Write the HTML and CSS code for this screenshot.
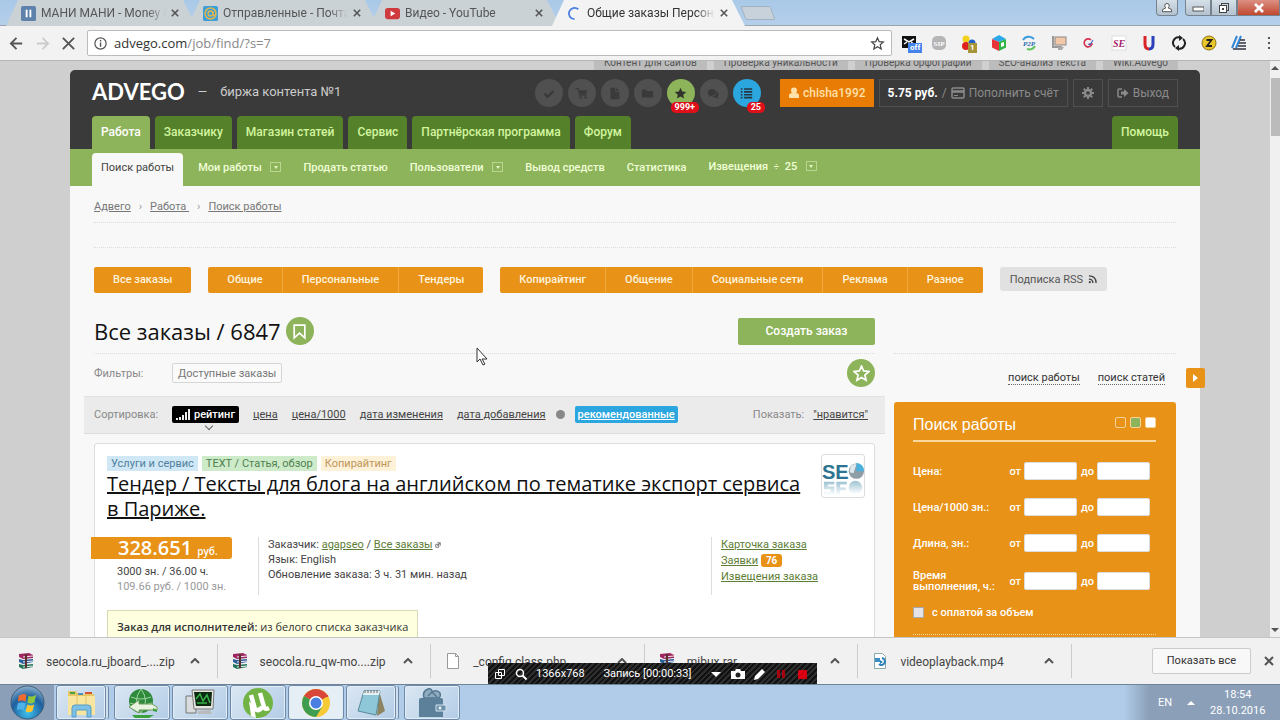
FILE: index.html
```
<!DOCTYPE html>
<html lang="ru">
<head>
    <meta charset="UTF-8">
    <meta name="viewport" content="width=device-width, initial-scale=1.0">
    <title>Общие заказы Персональные</title>
    <link rel="stylesheet" href="styles.css">
</head>
<body>
    <!-- browser tabs -->
    <div class="tabstrip">
        <div class="tab">
            <svg class="fav" viewBox="0 0 16 16"><rect width="16" height="16" rx="2" fill="#5f82ad"/><path d="M5 4h2v8H5zM9 4h2v8H9z" fill="#fff"/></svg>
            <span class="tab-title">МАНИ МАНИ - Money (</span>
            <button class="tab-close" aria-label="Закрыть"><svg viewBox="0 0 10 10"><path d="M1 1l8 8M9 1L1 9"/></svg></button>
        </div>
        <div class="tab">
            <svg class="fav" viewBox="0 0 16 16"><rect width="16" height="16" rx="2" fill="#3c9fd8"/><circle cx="8" cy="8" r="5.800" fill="none" stroke="#e3b64c" stroke-width="1.600"/><circle cx="8" cy="8" r="2.600" fill="none" stroke="#e3b64c" stroke-width="1.500"/><path d="M10.600 6v3q1 2 3 0" fill="none" stroke="#e3b64c" stroke-width="1.300"/></svg>
            <span class="tab-title">Отправленные - Почта</span>
            <button class="tab-close" aria-label="Закрыть"><svg viewBox="0 0 10 10"><path d="M1 1l8 8M9 1L1 9"/></svg></button>
        </div>
        <div class="tab">
            <svg class="fav" viewBox="0 0 16 16"><rect y="2" width="16" height="12" rx="3" fill="#cf3a3e"/><path d="M6 5l5 3-5 3z" fill="#fff"/></svg>
            <span class="tab-title">Видео - YouTube</span>
            <button class="tab-close" aria-label="Закрыть"><svg viewBox="0 0 10 10"><path d="M1 1l8 8M9 1L1 9"/></svg></button>
        </div>
        <div class="tab active">
            <svg class="fav" viewBox="0 0 16 16"><path d="M12 3.500A6 6 0 1 0 8 14" fill="none" stroke="#4a7fe0" stroke-width="2"/></svg>
            <span class="tab-title">Общие заказы Персона</span>
            <button class="tab-close" aria-label="Закрыть"><svg viewBox="0 0 10 10"><path d="M1 1l8 8M9 1L1 9"/></svg></button>
        </div>
        <button class="new-tab" aria-label="Новая вкладка"></button>
        <div class="win-buttons">
            <button class="win user" aria-label="Пользователь"><svg viewBox="0 0 12 12"><path d="M6 1.500a2.200 2.200 0 0 1 1 4.200l3.500 2v2h-9v-2l3.500-2a2.200 2.200 0 0 1 1-4.200z" fill="#fff" stroke="#555"/></svg></button>
            <button class="win left" aria-label="Свернуть"><svg viewBox="0 0 12 12"><rect x="1" y="5" width="11" height="4" fill="#fff" stroke="#555"/></svg></button>
            <button class="win mid" aria-label="Развернуть"><svg viewBox="0 0 12 12"><rect x="3.500" y="1.500" width="7" height="7" fill="none" stroke="#444"/><rect x="1.500" y="3.500" width="7" height="7" fill="#fff" stroke="#444"/><rect x="4" y="6" width="2" height="2" fill="#444"/></svg></button>
            <button class="win close" aria-label="Закрыть окно"><svg viewBox="0 0 12 12"><path d="M2 2l8 8M10 2l-8 8" stroke="#fff" stroke-width="2.600"/></svg></button>
        </div>
    </div>

    <!-- address bar -->
    <div class="toolbar">
        <button class="tool" aria-label="Назад"><svg viewBox="0 0 16 16"><path d="M14 8H2M8 2L2 8l6 6"/></svg></button>
        <button class="tool disabled" aria-label="Вперёд"><svg viewBox="0 0 16 16"><path d="M2 8h12M8 2l6 6-6 6"/></svg></button>
        <button class="tool" aria-label="Стоп"><svg viewBox="0 0 16 16"><path d="M2 2l12 12M14 2L2 14"/></svg></button>
        <div class="omnibox">
            <svg class="info" viewBox="0 0 16 16"><circle cx="8" cy="8" r="6" fill="none" stroke="#555" stroke-width="1.300"/><path d="M7.300 7h1.500v4.500H7.300zM7.300 4.300h1.500v1.500H7.300z" fill="#555"/></svg>
            <span class="url">advego.com<span>/job/find/?s=7</span></span>
            <svg class="bookmark" viewBox="0 0 16 16"><path d="M8 2l1.800 4.100 4.400.4-3.300 2.900 1 4.400L8 11.500l-3.900 2.300 1-4.400L1.800 6.500l4.400-.4z" fill="none" stroke="#444" stroke-width="1.300"/></svg>
        </div>
        <div class="extensions">
            <span class="ext"><svg viewBox="0 0 16 16"><path d="M1 1h14v12H1z" fill="#111"/><path d="M3 4l5 3 5-3M3 9l3-2M13 9l-3-2" stroke="#fff" stroke-width="1.500" fill="none"/></svg><b class="ext-badge blue">off</b></span>
            <span class="ext"><svg viewBox="0 0 16 16"><rect x="1" y="1" width="14" height="14" rx="5" fill="#b5b5b5"/><text x="8" y="11" class="ext-sip">SIP</text></svg></span>
            <span class="ext"><svg viewBox="0 0 16 16"><circle cx="5" cy="4" r="3.500" fill="#f4d21c"/><circle cx="11" cy="8" r="3.500" fill="#2262c7"/><circle cx="5" cy="11" r="4" fill="#e0221c"/></svg><b class="ext-badge olive">1</b></span>
            <span class="ext"><svg viewBox="0 0 16 16"><path d="M8 0l7 4-7 3-7-3z" fill="#2aa9e8"/><path d="M1 4l7 3v9l-7-3.500z" fill="#e8333a"/><path d="M15 4L8 7v9l7-3.500z" fill="#2fb545"/><path d="M10 8l3-1v4l-3 1z" fill="#fff"/></svg></span>
            <span class="ext"><svg viewBox="0 0 16 16"><path d="M2 5a7 7 0 0 1 11-1" stroke="#3a9be0" stroke-width="2" fill="none"/><path d="M14 11a7 7 0 0 1-8 3" stroke="#5fc25b" stroke-width="2" fill="none"/><text x="8" y="11" class="ext-p2p">P2P</text></svg></span>
            <span class="ext"><svg viewBox="0 0 16 16"><path d="M2 1v11h9" fill="none" stroke="#999" stroke-width="2"/><rect x="4" y="2" width="11" height="8" fill="#f3c8a8" stroke="#888"/><path d="M7 12l6 0-2 3H7z" fill="#aaa"/></svg></span>
            <span class="ext"><svg viewBox="0 0 16 16"><path d="M10 5a4 4 0 1 0 1 4H8" fill="none" stroke="#d83250" stroke-width="1.600"/><path d="M7 9l2 1 3-5" fill="none" stroke="#4a6fc0" stroke-width="1.200"/></svg></span>
            <span class="ext"><svg viewBox="0 0 16 16"><rect x="1" y="1" width="14" height="14" fill="#fff" stroke="#ddd"/><text x="8" y="12" class="ext-se">SE</text></svg></span>
            <span class="ext"><svg viewBox="0 0 16 16"><path d="M4 1v8q0 5 4 5" fill="none" stroke="#d9252a" stroke-width="3"/><path d="M12 1v8q0 5-4 5" fill="none" stroke="#2a3fb8" stroke-width="3"/></svg></span>
            <span class="ext"><svg viewBox="0 0 16 16"><path d="M9 2.500A5.500 5.500 0 0 0 4 12M7 13.500A5.500 5.500 0 0 0 12 4" fill="none" stroke="#222" stroke-width="2"/><path d="M8 0l4 3-4 3zM8 16l-4-3 4-3z" fill="#222"/></svg></span>
            <span class="ext"><svg viewBox="0 0 16 16"><circle cx="8" cy="8" r="7" fill="#e9c527" stroke="#8c7418"/><path d="M5.500 5h5L6 11h5" fill="none" stroke="#222" stroke-width="1.800"/></svg></span>
            <span class="ext"><svg viewBox="0 0 16 16"><path d="M6 1L1 13M10 1L5 13" stroke="#3187d6" stroke-width="2"/><path d="M9 5h5M8 8h7M7 11h8M2 14h13" stroke="#334" stroke-width="1.500"/></svg></span>
        </div>
        <button class="menu-dots" aria-label="Меню"><svg viewBox="0 0 4 16"><path d="M1 2h2v2H1zM1 7h2v2H1zM1 12h2v2H1z" fill="#555"/></svg></button>
    </div>

    <div class="viewport">
        <div class="scroll-area">
            <div class="page">
                <div class="top-links">
                    <a href="#">Контент для сайтов</a>
                    <a href="#">Проверка уникальности</a>
                    <a href="#">Проверка орфографии</a>
                    <a href="#">SEO-анализ текста</a>
                    <a href="#">Wiki.Advego</a>
                </div>

                <header class="header">
                    <div class="header-row">
                        <a class="logo" href="#">ADVEGO</a>
                        <span class="slogan"><i>—</i>биржа контента №1</span>
                        <div class="round-icons">
                            <a class="round" href="#" aria-label="Выполнено"><svg viewBox="0 0 16 16"><path d="M3 8l4 4 7-7" fill="none" stroke="#3a3a3a" stroke-width="3"/></svg></a>
                            <a class="round" href="#" aria-label="Корзина"><svg viewBox="0 0 16 16"><path d="M1 2h3l2 8h8" fill="none" stroke="#3a3a3a" stroke-width="1.500"/><path d="M4 4h11l-1 5H6z" fill="#3a3a3a"/><circle cx="7" cy="13" r="1.500" fill="#3a3a3a"/><circle cx="13" cy="13" r="1.500" fill="#3a3a3a"/></svg></a>
                            <a class="round" href="#" aria-label="Документы"><svg viewBox="0 0 16 16"><path d="M3 1h6v5h5v9H3zM10 1l4 4h-4z" fill="#3a3a3a"/></svg></a>
                            <a class="round" href="#" aria-label="Папка"><svg viewBox="0 0 16 16"><path d="M1 4q0-1 1-1h4l1 2h7q1 0 1 1v6q0 1-1 1H2q-1 0-1-1z" fill="#3a3a3a"/></svg></a>
                            <a class="round green" href="#" aria-label="Избранное"><svg viewBox="0 0 16 16"><path d="M8 1l2.100 4.600 5 .5-3.800 3.300 1.100 4.900L8 11.800l-4.400 2.500 1.100-4.900L.900 6.100l5-.5z" fill="#2f332a"/></svg><b class="count">999+</b></a>
                            <a class="round" href="#" aria-label="Сообщения"><svg viewBox="0 0 16 16"><ellipse cx="6" cy="6.500" rx="5" ry="4" fill="#3a3a3a"/><path d="M2 12l1-4 4 2zM12 5q4 3 1 7l1 2-4-1-4-1q6 0 6-7z" fill="#3a3a3a"/></svg></a>
                            <a class="round blue" href="#" aria-label="Извещения"><svg viewBox="0 0 16 16"><path d="M1 2.500h2M5 2.500h10M1 6h2M5 6h10M1 9.500h2M5 9.500h10M1 13h2M5 13h10" stroke="#263640" stroke-width="2"/></svg><b class="count">25</b></a>
                        </div>
                        <a class="user-btn" href="#"><svg viewBox="0 0 12 12"><circle cx="6" cy="3.500" r="3" fill="#ffe0a8"/><path d="M1 11V9q0-3 3-3h4q3 0 3 3v2z" fill="#ffe0a8"/></svg>chisha1992</a>
                        <a class="box-btn balance" href="#"><b>5.75 руб.</b> / <svg viewBox="0 0 14 12"><rect x="1" y="1" width="12" height="10" rx="1" fill="none" stroke="#8a8a8a" stroke-width="1.500"/><path d="M1 4.500h12" stroke="#8a8a8a" stroke-width="2.500"/><path d="M3 8.500h4" stroke="#8a8a8a"/></svg> Пополнить счёт</a>
                        <a class="box-btn" href="#" aria-label="Настройки"><svg viewBox="0 0 12 12"><circle cx="6" cy="6" r="3" fill="none" stroke="#8a8a8a" stroke-width="2.400"/><path d="M6 0v2M6 10v2M0 6h2M10 6h2M1.800 1.800l1.400 1.400M8.800 8.800l1.400 1.400M1.800 10.200l1.400-1.400M8.800 3.200l1.400-1.400" stroke="#8a8a8a" stroke-width="2"/></svg></a>
                        <a class="box-btn exit" href="#"><svg viewBox="0 0 12 12"><path d="M5 2H2q-1 0-1 1v6q0 1 1 1h3" fill="none" stroke="#8a8a8a" stroke-width="1.500"/><path d="M4 4.500h3V2l4.500 4L7 10V7.500H4z" fill="#8a8a8a"/></svg>Выход</a>
                    </div>
                    <nav class="main-nav">
                        <a class="current" href="#">Работа</a>
                        <a href="#">Заказчику</a>
                        <a href="#">Магазин статей</a>
                        <a href="#">Сервис</a>
                        <a href="#">Партнёрская программа</a>
                        <a href="#">Форум</a>
                        <a class="help" href="#">Помощь</a>
                    </nav>
                </header>

                <nav class="sub-nav">
                    <a class="current" href="#">Поиск работы</a>
                    <a href="#">Мои работы <i class="drop"></i></a>
                    <a href="#">Продать статью</a>
                    <a href="#">Пользователи <i class="drop"></i></a>
                    <a href="#">Вывод средств</a>
                    <a href="#">Статистика</a>
                    <a href="#">Извещения <small>÷</small> 25 <i class="drop"></i></a>
                </nav>

                <div class="content">
                    <div class="crumbs">
                        <a href="#">Адвего</a><i>›</i><a href="#">Работа&nbsp;</a><i>›</i><a href="#">Поиск работы</a>
                    </div>
                    <div class="blank-strip"></div>

                    <div class="type-row">
                        <div class="type-group"><a href="#">Все заказы</a></div>
                        <div class="type-group"><a href="#">Общие</a><a href="#">Персональные</a><a href="#">Тендеры</a></div>
                        <div class="type-group"><a href="#">Копирайтинг</a><a href="#">Общение</a><a href="#">Социальные сети</a><a href="#">Реклама</a><a href="#">Разное</a></div>
                        <a class="rss" href="#">Подписка RSS <svg viewBox="0 0 10 10"><path d="M1 1q8 0 8 8M1 4.500q4.500 0 4.500 4.500" fill="none" stroke="#444" stroke-width="1.500"/><circle cx="2" cy="8" r="1.200" fill="#444"/></svg></a>
                    </div>

                    <div class="columns">
                        <main class="orders">
                            <div class="title-row">
                                <h1>Все заказы / 6847</h1>
                                <a class="disc" href="#" aria-label="В закладки"><svg viewBox="0 0 16 16"><path d="M3 2h10v12l-5-4.500L3 14z" fill="none" stroke="#fff" stroke-width="1.600"/></svg></a>
                                <button class="create">Создать заказ</button>
                            </div>
                            <div class="filter-row">
                                <span>Фильтры:</span>
                                <button class="filter">Доступные заказы</button>
                                <a class="disc" href="#" aria-label="В избранное"><svg viewBox="0 0 16 16"><path d="M8 1l2 4.600 5 .5-3.800 3.300 1.100 4.900L8 11.800l-4.300 2.500 1.100-4.900L1 6.100l5-.5z" fill="none" stroke="#fff" stroke-width="1.600"/></svg></a>
                            </div>
                            <div class="sort-row">
                                <span class="sort-label">Сортировка:</span>
                                <a class="rating" href="#"><svg viewBox="0 0 14 11"><path d="M0 9h2v2H0zM3 8h2v3H3zM6 6h2v5H6zM9 3h2v8H9zM12 0h2v11h-2z" fill="#eee"/></svg>рейтинг</a>
                                <a href="#">цена</a>
                                <a href="#">цена/1000</a>
                                <a href="#">дата изменения</a>
                                <a href="#">дата добавления</a>
                                <i class="dot"></i>
                                <a class="recommended" href="#">рекомендованные</a>
                                <span class="show-label">Показать:</span>
                                <a href="#">"нравится"</a>
                            </div>

                            <article class="order">
                                <div class="order-head">
                                    <div class="order-name">
                                        <div class="tags"><span class="tag sky">Услуги и сервис</span><span class="tag mint">TEXT / Статья, обзор</span><span class="tag sand">Копирайтинг</span></div>
                                        <h2><a href="#">Тендер / Тексты для блога на английском по тематике экспорт сервиса в Париже.</a></h2>
                                    </div>
                                    <svg class="avatar" viewBox="0 0 44 44">
                                        <defs><linearGradient id="fade" x1="0" y1="0" x2="0" y2="1"><stop offset="0" stop-color="#9fc3d2"/><stop offset="1" stop-color="#fff"/></linearGradient></defs>
                                        <text x="0" y="25" class="seo">SE</text>
                                        <circle cx="36" cy="17" r="8" fill="#8f9da6"/><path d="M36 17V8q8 1 8 9z" fill="#4bb1dc"/><path d="M30 12q4-4 6-2l-3 9-4-1z" fill="#dfe9ee"/>
                                        <path d="M2 28h11v3H6v2h7v9H2v-3h7v-3H2zM15 28h11v3h-7v3h6v3h-6v5h-4z" fill="url(#fade)"/><circle cx="35" cy="34" r="7" fill="url(#fade)"/>
                                    </svg>
                                </div>
                                <div class="order-info">
                                    <div class="price-col">
                                        <div class="price">328.651 <small>руб.</small></div>
                                        <p>3000 зн. / 36.00 ч.</p>
                                        <p class="muted">109.66 руб. / 1000 зн.</p>
                                    </div>
                                    <div class="details">
                                        <p>Заказчик: <a href="#">agapseo</a> / <a href="#">Все заказы</a> <svg viewBox="0 0 8 8"><path d="M1 3h4v4H1zM3 1h4v4M3 5l4-4" fill="none" stroke="#555"/></svg></p>
                                        <p>Язык: English</p>
                                        <p>Обновление заказа: 3 ч. 31 мин. назад</p>
                                    </div>
                                    <div class="order-links">
                                        <p><a href="#">Карточка заказа</a></p>
                                        <p><a href="#">Заявки</a> <b>76</b></p>
                                        <p><a href="#">Извещения заказа</a></p>
                                    </div>
                                </div>
                                <div class="notice"><b>Заказ для исполнителей:</b> из белого списка заказчика</div>
                            </article>
                        </main>

                        <aside class="sidebar">
                            <div class="side-tabs">
                                <a href="#">поиск работы</a>
                                <a href="#">поиск статей</a>
                            </div>
                            <form class="search">
                                <div class="search-head">
                                    <h3>Поиск работы</h3>
                                    <i class="sq"></i><i class="sq green"></i><i class="sq white"></i>
                                </div>
                                <div class="field"><span>Цена:</span><label for="p1">от</label><input id="p1" type="text"><label for="p2">до</label><input id="p2" type="text"></div>
                                <div class="field"><span>Цена/1000 зн.:</span><label for="k1">от</label><input id="k1" type="text"><label for="k2">до</label><input id="k2" type="text"></div>
                                <div class="field"><span>Длина, зн.:</span><label for="l1">от</label><input id="l1" type="text"><label for="l2">до</label><input id="l2" type="text"></div>
                                <div class="field tall"><span>Время выполнения, ч.:</span><label for="t1">от</label><input id="t1" type="text"><label for="t2">до</label><input id="t2" type="text"></div>
                                <label class="check"><input type="checkbox"> с оплатой за объем</label>
                            </form>
                        </aside>
                    </div>
                </div>
                <button class="side-toggle" aria-label="Скрыть панель"></button>
            </div>
        </div>
        <div class="scrollbar"><i class="up"></i><i class="thumb"></i><i class="down"></i></div>
    </div>

    <!-- downloads -->
    <div class="downloads">
        <div class="download">
            <svg class="file" viewBox="0 0 16 16"><path d="M1 1l10-1 4 2v3L5 6 1 4z" fill="#a02660"/><path d="M1 6l4 1 10-1v3L5 11 1 9z" fill="#2d5f9a"/><path d="M1 11l4 1 10-1v3L5 16l-4-2z" fill="#23735a"/><path d="M5 4l10-1M5 9l10-1M5 14l10-1" stroke="#eee"/><path d="M7 1h2v14H7z" fill="#5b3030"/></svg>
            <span>seocola.ru_jboard_....zip</span>
            <button aria-label="Меню файла"><svg viewBox="0 0 10 6"><path d="M1 5l4-4 4 4"/></svg></button>
        </div>
        <div class="download">
            <svg class="file" viewBox="0 0 16 16"><path d="M1 1l10-1 4 2v3L5 6 1 4z" fill="#a02660"/><path d="M1 6l4 1 10-1v3L5 11 1 9z" fill="#2d5f9a"/><path d="M1 11l4 1 10-1v3L5 16l-4-2z" fill="#23735a"/><path d="M5 4l10-1M5 9l10-1M5 14l10-1" stroke="#eee"/><path d="M7 1h2v14H7z" fill="#5b3030"/></svg>
            <span>seocola.ru_qw-mo....zip</span>
            <button aria-label="Меню файла"><svg viewBox="0 0 10 6"><path d="M1 5l4-4 4 4"/></svg></button>
        </div>
        <div class="download">
            <svg class="file" viewBox="0 0 16 16"><path d="M2.500.5h8l3 3v12h-11z" fill="#fff" stroke="#999"/><path d="M10.500.5v3h3" fill="none" stroke="#999"/></svg>
            <span>_config.class.php</span>
            <button aria-label="Меню файла"><svg viewBox="0 0 10 6"><path d="M1 5l4-4 4 4"/></svg></button>
        </div>
        <div class="download">
            <svg class="file" viewBox="0 0 16 16"><path d="M1 1l10-1 4 2v3L5 6 1 4z" fill="#a02660"/><path d="M1 6l4 1 10-1v3L5 11 1 9z" fill="#2d5f9a"/><path d="M1 11l4 1 10-1v3L5 16l-4-2z" fill="#23735a"/><path d="M5 4l10-1M5 9l10-1M5 14l10-1" stroke="#eee"/><path d="M7 1h2v14H7z" fill="#5b3030"/></svg>
            <span>mibux.rar</span>
            <button aria-label="Меню файла"><svg viewBox="0 0 10 6"><path d="M1 5l4-4 4 4"/></svg></button>
        </div>
        <div class="download">
            <svg class="file" viewBox="0 0 16 16"><path d="M2.500.5h8l3 3v12h-11z" fill="#fff" stroke="#8aa"/><path d="M3 5h5v4H3z" fill="#3c8fc4"/><path d="M10 5a3.500 3.500 0 1 1-3 6" fill="none" stroke="#2b7fb8" stroke-width="2"/><path d="M8 7l3 2-3 2z" fill="#2b7fb8"/></svg>
            <span>videoplayback.mp4</span>
            <button aria-label="Меню файла"><svg viewBox="0 0 10 6"><path d="M1 5l4-4 4 4"/></svg></button>
        </div>
        <button class="show-all">Показать все</button>
        <button class="close-bar" aria-label="Закрыть панель"><svg viewBox="0 0 10 10"><path d="M1 1l8 8M9 1L1 9"/></svg></button>
    </div>

    <!-- taskbar -->
    <div class="taskbar">
        <button class="start" aria-label="Пуск"><svg viewBox="0 0 36 36"><defs><radialGradient id="orb" cx=".5" cy=".8" r=".8"><stop offset="0" stop-color="#3fc3ef"/><stop offset=".6" stop-color="#1d5f9e"/><stop offset="1" stop-color="#8fb2cc"/></radialGradient></defs><circle cx="18" cy="18" r="17" fill="url(#orb)" stroke="#3c5a78"/><path d="M9 11q4-3 8-1l-1 7q-4-2-8 0z" fill="#ef6a2e"/><path d="M19 11q4 2 8-1l-2 8q-4 2-7 0z" fill="#8fc63d"/><path d="M8 19q4-2 8 0l-2 7q-3-2-7 0z" fill="#4fb2ea"/><path d="M18 20q3 2 7 0l-2 7q-4 2-7 0z" fill="#fbc42d"/></svg></button>
        <button class="app stack" aria-label="Проводник"><svg viewBox="0 0 32 32"><path d="M3 4h8l2 3h16v20H3z" fill="#e5c766"/><path d="M3 9h27v19H3z" fill="#f8e6a0"/><path d="M12 9v10M21 9v10" stroke="#e0c468"/><path d="M5 5h5v2H5z" fill="#4aa04a"/><path d="M13 6h5v2h-5z" fill="#4a90c0"/><path d="M20 5h7v2h-7z" fill="#d9542c"/><path d="M7 30v-9q0-3 3-3h13q3 0 3 3v9h-4v-7H11v7z" fill="#7cc0e6" stroke="#5a9cc6"/></svg></button>
        <button class="app" aria-label="Менеджер загрузок"><svg viewBox="0 0 32 32"><circle cx="15" cy="14" r="12" fill="#2f8a3c"/><path d="M5 10q10 4 20 0M4 16q10 4 22 0M15 2q-9 12 0 24M15 2q9 12 0 24" fill="none" stroke="#9bd6a0"/><path d="M3 20l10-7v4h13l5 3v3H13v3z" fill="#e8f3e0" stroke="#6c9c58"/><path d="M31 25l-4-1v-3l4 2zM6 28h22l-5 3H9z" fill="#3aa23c"/></svg></button>
        <button class="app" aria-label="Монитор"><svg viewBox="0 0 32 32"><path d="M2 9h10v17H2z" fill="#d8dcdc" stroke="#777"/><path d="M8 3h22l-1 19H10z" fill="#e6e6e0" stroke="#777"/><path d="M10 5h18l-1 14H12z" fill="#0c2a10"/><path d="M12 12l4-5 3 7 4-6 3 8M13 16h10" stroke="#37b24a" stroke-width="1.500" fill="none"/><path d="M14 24l12-1 2 4H14z" fill="#bbb"/></svg></button>
        <button class="app" aria-label="Торрент"><svg viewBox="0 0 32 32"><circle cx="16" cy="16" r="15" fill="#72b345"/><path d="M9 8l4 14q4 3 7-2M18 6l4 14q1 3 5 1" fill="none" stroke="#fff" stroke-width="4.500"/><path d="M12 20l2 11-5-2-2-15z" fill="#fff"/></svg></button>
        <button class="app bright" aria-label="Chrome"><svg viewBox="0 0 32 32"><circle cx="16" cy="16" r="14" fill="#f6c936"/><path d="M16 16L3.900 9A14 14 0 0 1 28.100 9z" fill="#d9473a"/><path d="M16 16L3.900 9A14 14 0 0 0 16 30l6-10z" fill="#3f9d4f"/><path d="M16 9h12.100" stroke="#d9473a" stroke-width="2"/><circle cx="16" cy="16" r="7" fill="#fff"/><circle cx="16" cy="16" r="5.500" fill="#4a7ee0"/></svg></button>
        <button class="app stack" aria-label="Блокнот"><svg viewBox="0 0 32 32"><path d="M24 4l6 20-8 5z" fill="#8c8360"/><path d="M9 4h16l-4 24-18-4z" fill="#8ec8d8" stroke="#5a8a98"/><path d="M9 4h16l-1 4H8z" fill="#e4eff2"/><path d="M10 3v3M13 3v3M16 3v3M19 3v3M22 3v3" stroke="#666"/></svg></button>
        <button class="app" aria-label="Кошелёк"><svg viewBox="0 0 32 32"><path d="M8 11q-2-7 4-9 4-1 4 3 5-3 8 1 1 3-1 5z" fill="#8fabc0" stroke="#557891" stroke-width="1.500"/><path d="M12 9l4-4 5 5" fill="none" stroke="#557891" stroke-width="1.500"/><path d="M3 13q0-2 2-2h20q2 0 2 2v17H3z" fill="#5c7f9a"/><path d="M20 18h10v6H20z" fill="#6f92ab" stroke="#d5e3ee"/><circle cx="24" cy="21" r="1.500" fill="#e6f0f6"/></svg></button>
        <div class="tray">
            <span>EN</span>
            <i></i>
            <div class="clock"><span>18:54</span><span>28.10.2016</span></div>
        </div>
    </div>

    <!-- screen recorder panel -->
    <div class="recorder">
        <svg viewBox="0 0 12 12"><path d="M4.500 1.500h6v6h-6zM1.500 4.500h6v6h-6z" fill="none" stroke="#fff"/></svg>
        <svg viewBox="0 0 12 12"><circle cx="5" cy="5" r="3.500" fill="none" stroke="#fff" stroke-width="1.500"/><path d="M7.500 7.500l4 4" stroke="#fff" stroke-width="2"/></svg>
        <span>1366x768</span>
        <span class="rec-time">Запись [00:00:33]</span>
        <svg viewBox="0 0 12 12"><path d="M1 4h10L6 9z" fill="#fff"/></svg>
        <svg class="wide" viewBox="0 0 14 12"><path d="M0 3h4l1-2h4l1 2h4v8H0z" fill="#fff"/><circle cx="7" cy="7" r="2.500" fill="#222"/></svg>
        <svg viewBox="0 0 12 12"><path d="M0 12l1-4 7-7 3 3-7 7z" fill="#fff"/></svg>
        <svg viewBox="0 0 12 12"><path d="M2 2h3v8H2zM7 2h3v8H7z" fill="#a8000c"/></svg>
        <svg viewBox="0 0 12 12"><rect x="2" y="2" width="9" height="9" rx="1" fill="#d80010"/></svg>
    </div>

    <svg class="cursor" viewBox="0 0 12 19"><path d="M1 1v14l3-3 3 6 2-1-3-5h5z" fill="#fff" stroke="#333"/></svg>
</body>
</html>
```
FILE: styles.css
```
* {
    box-sizing: border-box;
}
body {
    margin: 0;
    height: 100vh;
    display: flex;
    flex-direction: column;
    overflow: hidden;
    position: relative;
    font-family: Roboto, "Open Sans", sans-serif;
    font-size: 11px;
    color: #444;
    background: #f7f7f7;
}
button {
    font-family: inherit;
    padding: 0;
    border: 0;
    background: none;
}
p, h1, h2, h3 {
    margin: 0;
    font-weight: 400;
}
svg {
    display: block;
    flex: none;
}

/* browser tabs */
.tabstrip {
    height: 26px;
    flex: none;
    display: flex;
    padding-left: 6px;
    background: linear-gradient(#a9c9e8, #b4cfea);
    border-bottom: 1px solid #9aa5ad;
}
.tab {
    width: 190px;
    height: 26px;
    margin-right: -8px;
    padding: 0 17px 0 15px;
    display: flex;
    align-items: center;
    gap: 5px;
    background: #cbd2d6;
    clip-path: polygon(12px 0, 177px 0, 190px 100%, 0 100%);
    color: #555;
}
.tab.active {
    width: 193px;
    background: #f3f3f3;
    color: #333;
    clip-path: polygon(12px 0, 180px 0, 193px 100%, 0 100%);
}
.fav {
    width: 15px;
    height: 15px;
}
.tab-title {
    flex: 1;
    overflow: hidden;
    white-space: nowrap;
    font-size: 12px;
    mask-image: linear-gradient(to right, #000 85%, transparent);
}
.tab-close svg {
    width: 8px;
    height: 8px;
    stroke: #555;
    stroke-width: 2;
}
.new-tab {
    width: 30px;
    height: 14px;
    margin: 6px 0 0 6px;
    background: #c8d2da;
    border: 1px solid #a3b2c0;
    border-radius: 2px;
    transform: skewX(20deg);
}
.win-buttons {
    margin-left: auto;
    display: flex;
    height: 16px;
}
.win {
    width: 26px;
    display: flex;
    align-items: center;
    justify-content: center;
    border: 1px solid #76838f;
    border-top: 0;
    background: linear-gradient(#d5dfe8, #b3c2cf);
}
.win svg {
    width: 12px;
    height: 12px;
}
.win.user {
    width: 22px;
    margin-right: 7px;
    border-radius: 0 0 4px 4px;
}
.win.left {
    border-radius: 0 0 0 4px;
}
.win.close {
    width: 43px;
    background: linear-gradient(#dc8f83, #c0492f);
}

/* toolbar */
.toolbar {
    height: 35px;
    flex: none;
    display: flex;
    align-items: center;
    padding: 0 9px;
    background: #f2f2f2;
    border-bottom: 1px solid #b5b5b5;
}
.tool {
    margin-right: 11px;
}
.tool svg {
    width: 15px;
    height: 15px;
    fill: none;
    stroke: #555;
    stroke-width: 2;
}
.tool.disabled svg {
    stroke: #ccc;
}
.omnibox {
    flex: 1;
    height: 26px;
    display: flex;
    align-items: center;
    gap: 6px;
    padding: 0 6px 0 5px;
    background: #fff;
    border: 1px solid #bbb;
    border-radius: 2px;
}
.info, .bookmark {
    width: 15px;
    height: 15px;
}
.url {
    flex: 1;
    font-family: "Open Sans", sans-serif;
    font-size: 13px;
    color: #333;
}
.url span {
    color: #888;
}
.extensions {
    display: flex;
    gap: 14px;
    margin-left: 9px;
}
.ext {
    position: relative;
    width: 16px;
    height: 16px;
}
.ext svg {
    width: 16px;
    height: 16px;
}
.ext-badge {
    position: absolute;
    left: 7px;
    top: 8px;
    padding: 0 2px;
    font-size: 8px;
    line-height: 10px;
    color: #fff;
}
.ext-badge.blue {
    background: #4583ec;
}
.ext-badge.olive {
    background: #a8953a;
}
.ext-sip, .ext-p2p, .ext-se {
    font: bold 7px "Liberation Serif", serif;
    text-anchor: middle;
    fill: #fff;
}
.ext-p2p {
    font-style: italic;
    fill: #2a6fb5;
}
.ext-se {
    font-size: 10px;
    font-style: italic;
    fill: #a2206a;
}
.menu-dots {
    margin-left: 20px;
}
.menu-dots svg {
    width: 4px;
    height: 16px;
}

/* page */
.viewport {
    flex: 1;
    min-height: 0;
    display: flex;
    background: #cfcfcf;
}
.scroll-area {
    flex: 1;
    overflow: hidden;
}
.page {
    position: relative;
    max-width: 1130px;
    margin: 0 auto;
    background: linear-gradient(#cfcfcf 20px, #f8f8f8 20px);
}
.top-links {
    height: 9px;
    overflow: hidden;
    display: flex;
    align-items: flex-end;
    justify-content: flex-end;
    gap: 7px;
    padding-right: 22px;
}
.top-links a {
    padding: 0 10px;
    font-size: 10px;
    line-height: 14px;
    background: #bcbcbc;
    color: #555;
    text-decoration: none;
}
.header {
    padding: 9px 22px 0;
    background: #3a3a3a;
    border-radius: 5px 5px 0 0;
}
.header-row {
    display: flex;
    align-items: center;
    height: 28px;
}
.logo {
    padding-bottom: 4px;
    font-family: Lato, sans-serif;
    font-weight: 700;
    font-size: 22px;
    color: #fff;
    text-decoration: none;
}
.slogan {
    margin-left: 13px;
    padding-bottom: 4px;
    font-size: 13px;
    color: #ccc;
}
.slogan i {
    margin-right: 13px;
    font-style: normal;
    font-size: 12px;
}
.round-icons {
    display: flex;
    gap: 5px;
    margin-left: auto;
}
.round {
    position: relative;
    width: 28px;
    height: 28px;
    display: flex;
    align-items: center;
    justify-content: center;
    border-radius: 50%;
    background: #505050;
}
.round svg {
    width: 13px;
    height: 13px;
}
.round.green {
    background: #8db45a;
}
.round.blue {
    background: #2ba6de;
}
.count {
    position: absolute;
    top: 23px;
    right: -4px;
    padding: 0 4px;
    border-radius: 5px;
    background: #e0101a;
    color: #fff;
    font-size: 9px;
    line-height: 11px;
}
.user-btn {
    display: flex;
    align-items: center;
    gap: 3px;
    height: 28px;
    margin-left: 19px;
    padding: 0 8px;
    background: #e87c04;
    color: #ffe0a8;
    font-size: 12px;
    font-weight: 500;
    text-decoration: none;
}
.user-btn svg, .box-btn svg {
    width: 12px;
    height: 12px;
}
.box-btn {
    display: flex;
    align-items: center;
    gap: 4px;
    height: 28px;
    margin-left: 5px;
    padding: 0 8px;
    border: 1px solid #505050;
    color: #8a8a8a;
    font-size: 12px;
    text-decoration: none;
}
.box-btn b {
    color: #fff;
}
.balance svg {
    width: 14px;
}
.main-nav {
    display: flex;
    gap: 5px;
    margin-top: 9px;
}
.main-nav a {
    padding: 0 9px;
    line-height: 33px;
    border-radius: 4px 4px 0 0;
    background: #56812b;
    color: #d2f59e;
    font-size: 12px;
    font-weight: 500;
    text-decoration: none;
}
.main-nav .current {
    background: #8db45a;
    color: #fff;
}
.main-nav .help {
    margin-left: auto;
}
.sub-nav {
    display: flex;
    align-items: flex-end;
    gap: 22px;
    height: 37px;
    padding-left: 22px;
    background: #8db45a;
}
.sub-nav a {
    line-height: 37px;
    color: #f1ffd8;
    font-weight: 500;
    text-decoration: none;
}
.sub-nav .current {
    line-height: 30px;
    height: 33px;
    margin-right: -7px;
    padding: 0 9px;
    border-radius: 4px 4px 0 0;
    background: #f8f8f8;
    color: #444;
    font-weight: 400;
}
.sub-nav small {
    margin: 0 3px;
    font-size: 9px;
}
.drop {
    display: inline-block;
    width: 11px;
    height: 10px;
    margin-left: 6px;
    border: 1px solid #b9d58f;
    vertical-align: -1px;
}
.drop::after {
    content: "";
    display: block;
    width: 0;
    margin: 3px auto 0;
    border: 2px solid transparent;
    border-top: 3px solid #e4f4c8;
    border-bottom: 0;
}

.content {
    padding: 0 24px;
}
.crumbs {
    display: flex;
    align-items: center;
    gap: 8px;
    height: 37px;
    padding-top: 4px;
    border-bottom: 1px dotted #ddd;
    color: #999;
}
.crumbs a {
    color: #777;
}
.crumbs i {
    font-style: normal;
}
.blank-strip {
    height: 25px;
    border-bottom: 1px dotted #ddd;
}
.type-row {
    display: flex;
    gap: 17px;
    padding-top: 19px;
}
.type-group {
    display: flex;
    height: 26px;
    border-radius: 2px;
    background: #e89217;
}
.type-group a {
    padding: 0 19px;
    line-height: 25px;
    color: #fff3dc;
    font-weight: 500;
    text-decoration: none;
}
.type-group a + a {
    border-left: 1px solid #f0a941;
}
.rss {
    display: flex;
    align-items: center;
    gap: 5px;
    height: 24px;
    padding: 0 10px;
    border-radius: 3px;
    background: #e1e1e1;
    color: #555;
    text-decoration: none;
}
.rss svg {
    width: 9px;
    height: 9px;
}
.columns {
    display: flex;
    gap: 19px;
    margin-top: 20px;
}
.orders {
    flex: 1;
}
.title-row {
    display: flex;
    align-items: center;
    height: 41px;
    padding-bottom: 4px;
    border-bottom: 1px dotted #ddd;
}
.title-row h1 {
    font-family: "Open Sans", sans-serif;
    font-size: 22px;
    color: #111;
}
.disc {
    display: flex;
    align-items: center;
    justify-content: center;
    width: 28px;
    height: 28px;
    margin-left: 5px;
    border-radius: 50%;
    background: #8db45a;
}
.disc svg {
    width: 17px;
    height: 17px;
}
.create {
    width: 137px;
    height: 27px;
    margin-left: auto;
    border-radius: 2px;
    background: #8db45a;
    color: #fff;
    font-size: 12px;
    font-weight: 500;
}
.filter-row {
    display: flex;
    align-items: center;
    height: 42px;
    padding-bottom: 4px;
    color: #888;
}
.filter-row span {
    width: 78px;
}
.filter {
    height: 20px;
    padding: 0 5px;
    border: 1px solid #d5d5d5;
    border-radius: 2px;
    background: #fafafa;
    color: #777;
    font-size: 11px;
}
.filter-row .disc {
    margin-left: auto;
}
.sort-row {
    display: flex;
    align-items: center;
    height: 38px;
    margin: 0 -10px;
    padding: 0 17px 2px 10px;
    gap: 14px;
    background: #ebebeb;
    border-top: 1px solid #e2e2e2;
    border-bottom: 1px solid #ddd;
}
.sort-row a {
    color: #444;
}
.sort-label, .show-label {
    color: #888;
}
.sort-label {
    width: 64px;
}
.show-label {
    margin-left: auto;
    margin-right: -5px;
}
.sort-row .rating {
    position: relative;
    display: flex;
    align-items: center;
    gap: 4px;
    padding: 0 4px;
    line-height: 17px;
    border-radius: 2px;
    background: #000;
    color: #fff;
    font-weight: 500;
    text-decoration: none;
}
.rating svg {
    width: 14px;
    height: 11px;
}
.rating::after {
    content: "";
    position: absolute;
    left: 50%;
    top: 17px;
    width: 5px;
    height: 5px;
    border: solid #666;
    border-width: 0 1px 1px 0;
    transform: rotate(45deg);
}
.dot {
    width: 9px;
    height: 9px;
    margin: 0 -4px;
    border-radius: 50%;
    background: #888;
}
.sort-row .recommended {
    padding: 0 3px;
    line-height: 17px;
    border-radius: 2px;
    background: #2ba6de;
    color: #fff;
    font-weight: 500;
}

/* order card */
.order {
    margin-top: 9px;
    padding: 10px 9px 20px 12px;
    background: #fff;
    border: 1px solid #ddd;
    border-radius: 3px;
}
.order-head {
    display: flex;
    gap: 16px;
}
.order-name {
    flex: 1;
}
.tags {
    display: flex;
    gap: 4px;
    padding-top: 2px;
}
.tag {
    padding: 0 4px;
    line-height: 15px;
}
.tag.sky {
    background: #d0e7f5;
    color: #4f7f9c;
}
.tag.mint {
    background: #cdebc9;
    color: #4f8050;
}
.tag.sand {
    background: #fdf1d8;
    color: #c0955a;
}
.order h2 {
    font-family: "Open Sans", sans-serif;
    font-size: 20px;
    line-height: 25px;
}
.order h2 a {
    color: #111;
}
.avatar {
    width: 44px;
    height: 44px;
    border: 1px solid #ddd;
    border-radius: 3px;
}
.seo {
    font: bold 21px "Liberation Sans", sans-serif;
    fill: #2d7492;
}
.order-info {
    display: flex;
    padding-top: 16px;
    line-height: 15px;
}
.order-info a {
    color: #5b7d35;
}
.price-col {
    width: 151px;
    margin-left: -16px;
    color: #444;
}
.price-col p {
    padding-left: 26px;
}
.price {
    width: 141px;
    height: 22px;
    margin-bottom: 5px;
    padding-left: 27px;
    border-radius: 0 3px 3px 0;
    background: #e89217;
    color: #fff;
    font-family: "Open Sans", sans-serif;
    font-size: 20px;
    font-weight: 600;
    line-height: 22px;
}
.price small {
    font-size: 10px;
}
.price-col .muted {
    color: #999;
}
.details {
    flex: 1;
    height: 58px;
    margin-left: 16px;
    padding-left: 9px;
    border-left: 1px solid #ddd;
}
.details svg {
    display: inline-block;
    width: 6px;
    height: 6px;
}
.order-links {
    width: 154px;
    padding-left: 9px;
    border-left: 1px solid #ddd;
    line-height: 16px;
}
.order-links b {
    padding: 1px 5px;
    border-radius: 3px;
    background: #e89217;
    color: #fff;
    font-size: 10px;
    line-height: 10px;
}
.notice {
    width: fit-content;
    margin-top: 15px;
    padding: 8px 9px;
    border: 1px solid #d9d9b8;
    background: #feffdf;
    color: #333;
    font-family: "Open Sans", sans-serif;
    line-height: 16px;
}
.notice b {
    font-weight: 600;
}

/* sidebar */
.sidebar {
    width: 282px;
    flex: none;
    padding-top: 40px;
}
.side-tabs {
    display: flex;
    justify-content: flex-end;
    gap: 18px;
    height: 49px;
    padding: 17px 11px 0 0;
    border-top: 1px dotted #ddd;
}
.side-tabs a {
    height: 14px;
    line-height: 14px;
    border-bottom: 1px dotted #666;
    color: #333;
    text-decoration: none;
}
.search {
    height: 300px;
    padding: 10px 20px 0 19px;
    border-radius: 3px 3px 0 0;
    background: #e89217;
    color: #fff;
    font-weight: 500;
}
.search-head {
    display: flex;
    gap: 4px;
    height: 30px;
    margin-bottom: 11px;
    border-bottom: 2px solid #f9d8a0;
}
.search-head h3 {
    flex: 1;
    font-family: "Liberation Sans", sans-serif;
    font-size: 16px;
    line-height: 26px;
}
.sq {
    width: 11px;
    height: 11px;
    margin-top: 5px;
    border: 1px solid #f7d39a;
    border-radius: 2px;
}
.sq.green {
    background: #8db45a;
}
.sq.white {
    background: #fff;
}
.field {
    display: flex;
    align-items: center;
    height: 36px;
    line-height: 11px;
}
.field.tall {
    height: 40px;
}
.field span {
    flex: 1;
    padding-right: 8px;
}
.field input {
    width: 53px;
    height: 18px;
    margin: 0 4px 0 3px;
    padding: 0 4px;
    border: 1px solid #ddd;
    border-radius: 2px;
    background: #fff;
}
.field input:last-child {
    margin-right: 6px;
}
.check {
    display: flex;
    align-items: center;
    gap: 8px;
    height: 34px;
    padding-bottom: 11px;
    border-bottom: 1px dotted #f9d8a0;
}
.check input {
    appearance: none;
    width: 11px;
    height: 11px;
    margin: 0;
    border: 1px solid #aaa;
    background: #e4e4e8;
}
.side-toggle {
    position: absolute;
    top: 307px;
    right: -5px;
    width: 19px;
    height: 20px;
    border-radius: 2px;
    background: #e89217;
}
.side-toggle::after {
    content: "";
    display: block;
    width: 0;
    margin-left: 7px;
    border: solid transparent;
    border-width: 4px 0 4px 5px;
    border-left-color: #fff;
}

.scrollbar {
    width: 10px;
    display: flex;
    flex-direction: column;
    align-items: center;
    padding: 5px 0;
    background: #f0f0f0;
}
.scrollbar .up, .scrollbar .down {
    border: 4px solid transparent;
    border-top: 0;
    border-bottom-color: #555;
}
.scrollbar .down {
    margin-top: auto;
    border-top: 4px solid #555;
    border-bottom: 0;
}
.scrollbar .thumb {
    width: 9px;
    height: 58px;
    margin-top: 8px;
    background: #bbb;
}

/* downloads */
.downloads {
    height: 47px;
    flex: none;
    display: flex;
    align-items: center;
    padding: 0 6px 1px 4px;
    border-top: 1px solid #c5c5c5;
    background: #f1f1f1;
}
.download {
    flex: 1;
    display: flex;
    align-items: center;
    height: 34px;
    padding: 0 17px 0 14px;
    border-right: 1px solid #ccc;
    font-size: 12px;
}
.file {
    width: 16px;
    height: 16px;
    margin-right: 12px;
}
.download span {
    flex: 1;
    padding-top: 3px;
    white-space: nowrap;
}
.download button svg, .close-bar svg {
    width: 10px;
    height: 6px;
    fill: none;
    stroke: #555;
    stroke-width: 2;
}
.close-bar svg {
    height: 10px;
}
.show-all {
    width: 99px;
    height: 26px;
    margin: 0 13px 0 80px;
    border: 1px solid #ccc;
    border-radius: 2px;
    background: #f8f8f8;
    color: #333;
    font-size: 11px;
}

/* taskbar */
.taskbar {
    height: 36px;
    flex: none;
    display: flex;
    gap: 2px;
    background: #b0cce8;
    border-top: 1px solid #6f8499;
}
.start {
    width: 54px;
    display: flex;
    justify-content: center;
    background: #8ba0b8;
}
.start svg {
    width: 35px;
    height: 35px;
}
.app {
    width: 56px;
    display: flex;
    align-items: center;
    justify-content: center;
    border: 1px solid #6f8aa8;
    border-radius: 3px;
    background: linear-gradient(135deg, #dbe7f3, #b2cce6);
    box-shadow: inset 0 0 0 1px #e3edf6;
}
.app svg {
    width: 32px;
    height: 32px;
}
.app.stack {
    width: 50px;
    margin-right: 6px;
    box-shadow: inset 0 0 0 1px #e3edf6, 3px 0 0 -1px #cfdfee, 4px 0 0 -1px #6f8aa8;
}
.app.bright {
    background: #e6eef6;
}
.tray {
    margin-left: auto;
    display: flex;
    align-items: center;
    gap: 15px;
    width: 156px;
    padding: 0 18px 0 34px;
    background: linear-gradient(to right, #b0cce8, #8ba0b8 25px);
    color: #fff;
    font-size: 11px;
    white-space: nowrap;
}
.tray i {
    border: 4px solid transparent;
    border-top: 0;
    border-bottom-color: #fff;
}
.clock {
    display: flex;
    flex-direction: column;
    align-items: center;
    line-height: 16px;
}

.recorder {
    position: absolute;
    left: 488px;
    bottom: 36px;
    width: 329px;
    height: 21px;
    display: flex;
    align-items: center;
    gap: 9px;
    padding: 0 9px 0 6px;
    background: repeating-linear-gradient(135deg, #111 0 2px, #2e2e2e 2px 4px);
    color: #fff;
    white-space: nowrap;
}
.recorder svg {
    width: 12px;
    height: 12px;
}
.recorder .wide {
    width: 14px;
}
.rec-time {
    margin: 0 auto;
}
.cursor {
    position: absolute;
    left: 476px;
    top: 347px;
    width: 12px;
    height: 19px;
}
```
